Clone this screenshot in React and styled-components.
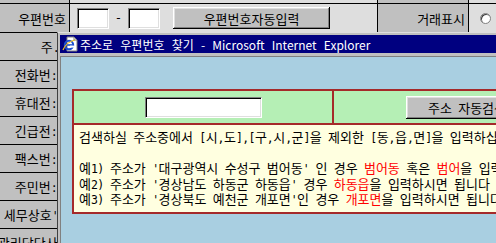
import React from "react";
import styled, { createGlobalStyle } from "styled-components";

const HANGUL = '"Noto Sans CJK KR", sans-serif';
const TITLE = '"Noto Sans CJK KR", sans-serif';

const Global = createGlobalStyle`
  html, body { margin: 0; padding: 0; background: #c0c0c0; }
  * { box-sizing: border-box; }
`;

const Page = styled.div`
  position: relative;
  width: 496px;
  height: 243px;
  overflow: hidden;
  background: #c0c0c0;
  font: 13px ${HANGUL};
  color: #000;
`;

// half-width latin run, like the old Gulim ascii
const Latin = styled.span`
  font-family: "DejaVu Sans Mono", monospace;
  font-size: 11.5px;
  letter-spacing: -0.6px;
`;

const mixed = text =>
  text.split(/([\x00-\x7f]+)/).map((part, i) =>
    i % 2 ? <Latin key={i}>{part}</Latin> : part
  );

const FormGrid = styled.div`
  display: grid;
  grid-template-columns: 69px 307px 90px 1fr;
  grid-template-rows: 3px 28px repeat(8, 27px);
  gap: 1px;
  background: #000;
`;

const Label = styled.div`
  background: #c0c0c0;
  display: flex;
  align-items: center;
  justify-content: flex-end;
  padding-right: ${p => p.$pad ?? 3}px;
  white-space: nowrap;
`;

const Value = styled.div`
  background: #dedede;
  display: flex;
  align-items: center;
  grid-column: ${p => (p.$span ? "2 / -1" : "auto")};
  padding-left: ${p => p.$pl || 0}px;
`;

const Sunken = styled.span`
  display: inline-block;
  width: ${p => p.$w}px;
  height: 21px;
  background: #fff;
  border-top: 1px solid #808080;
  border-left: 1px solid #808080;
  border-right: 1px solid #fff;
  border-bottom: 1px solid #fff;
  box-shadow: inset 1px 1px 0 #000, inset -1px -1px 0 #dfdfdf;
`;

const Dash = styled.span`
  width: 19px;
  text-align: center;
  font: 12px "DejaVu Sans", sans-serif;
`;

const Button = styled.span`
  display: inline-flex;
  align-items: center;
  justify-content: center;
  width: ${p => p.$w}px;
  height: ${p => p.$h || 22}px;
  margin-left: ${p => p.$ml || 0}px;
  background: #c0c0c0;
  white-space: nowrap;
  box-shadow: inset -1px -1px 0 #000, inset 1px 1px 0 #fff,
    inset -2px -2px 0 #808080, inset 2px 2px 0 #dfdfdf;
`;

const Radio = styled.span`
  width: 11px;
  height: 11px;
  margin-left: 11px;
  border-radius: 50%;
  background: #fff;
  border: 1px solid #808080;
  box-shadow: inset 1px 1px 0 #404040;
`;

const Win = styled.div`
  position: absolute;
  left: 57px;
  top: 32px;
  width: 480px;
  height: 240px;
  background: #c0c0c0;
  border-top: 1px solid #dfdfdf;
  border-left: 1px solid #404040;
  padding: 2px 0 0 2px;
  display: flex;
  flex-direction: column;
`;

const TitleBar = styled.div`
  height: 18px;
  background: #000080;
  color: #fff;
  display: flex;
  align-items: center;
  gap: 2px;
  padding-left: 2px;
  font: 12px ${TITLE};
  word-spacing: 4.5px;
  white-space: nowrap;
`;

const Content = styled.div`
  flex: 1;
  margin-top: 3px;
  background: #a9cfe1;
  border-top: 1px solid #808080;
  border-left: 1px solid #808080;
  padding: 32px 0 0 11px;
`;

const Table = styled.div`
  width: 520px;
  border: 2px solid #a52a2a;
`;

const GreenRow = styled.div`
  display: flex;
  height: 34px;
  border-bottom: 2px solid #a52a2a;
  background: #b5efb5;
`;

const GreenCell = styled.div`
  width: ${p => (p.$w ? p.$w + "px" : "auto")};
  flex: ${p => (p.$w ? "none" : 1)};
  display: flex;
  align-items: center;
  justify-content: ${p => (p.$center ? "center" : "flex-start")};
  border-right: ${p => (p.$line ? "2px solid #a52a2a" : "none")};
`;

const Notes = styled.div`
  background: #ffffe0;
  padding: 4px 0 5px 5px;
  line-height: 15.5px;
  white-space: nowrap;
  overflow: hidden;
`;

const Line = styled.div`
  height: 15.5px;
`;

const Em = styled.span`
  color: #f00;
`;

function IeIcon() {
  return (
    <svg width="16" height="16" viewBox="0 0 16 16">
      <path d="M5 1h7l3 3v11H5z" fill="#fff" stroke="#808080" />
      <path d="M12 1v3h3" fill="none" stroke="#808080" />
      <circle cx="7" cy="9" r="4.2" fill="none" stroke="#1c4fd0" strokeWidth="2" />
      <path d="M3.5 9h7" stroke="#1c4fd0" strokeWidth="1.6" />
      <path d="M1 14c2-5 7-9 12-10" fill="none" stroke="#f0c020" strokeWidth="1.2" />
      <rect x="8" y="9.6" width="4" height="2" fill="#fff" />
    </svg>
  );
}

const labels = [
  ["주.", 10],
  ["전화번:", 12],
  ["휴대전:", 12],
  ["긴급전:", 12],
  ["팩스번:", 12],
  ["주민번:", 12],
  ["세무상호'", 11],
  ["관리담당사:", 5],
];

// each example: [before, red, middle, red, after]
const examples = [
  ["예1) 주소가 '대구광역시 수성구 범어동' 인 경우 ", "범어동", " 혹은 ", "범어", "을 입력하시면 됩니다"],
  ["예2) 주소가 '경상남도 하동군 하동읍' 경우 ", "하동읍", "을 입력하시면 됩니다"],
  ["예3) 주소가 '경상북도 예천군 개포면'인 경우 ", "개포면", "을 입력하시면 됩니다"],
];

export default function App() {
  return (
    <Page>
      <Global />
      <FormGrid>
        <Label />
        <Value />
        <Label />
        <Value />

        <Label>우편번호</Label>
        <Value $pl={7}>
          <Sunken $w={32} />
          <Dash>-</Dash>
          <Sunken $w={32} />
          <Button $w={157} $ml={13}>우편번호자동입력</Button>
        </Value>
        <Label>거래표시</Label>
        <Value>
          <Radio />
        </Value>

        {labels.map(([text, pad]) => (
          <React.Fragment key={text}>
            <Label $pad={pad}><span>{mixed(text)}</span></Label>
            <Value $span />
          </React.Fragment>
        ))}
      </FormGrid>

      <Win>
        <TitleBar>
          <IeIcon />
          <span>주소로 우편번호 찾기 - Microsoft Internet Explorer</span>
        </TitleBar>
        <Content>
          <Table>
            <GreenRow>
              <GreenCell $w={260} $line $center>
                <Sunken $w={117} />
              </GreenCell>
              <GreenCell>
                <Button $w={122} $h={23} $ml={72}><span>{mixed("주소 자동검색")}</span></Button>
              </GreenCell>
            </GreenRow>
            <Notes>
              <Line>{mixed("검색하실 주소중에서 [시,도],[구,시,군]을 제외한 [동,읍,면]을 입력하십시오.")}</Line>
              <Line />
              {examples.map((parts, n) => (
                <Line key={n}>
                  {parts.map((p, i) =>
                    i % 2 ? <Em key={i}>{p}</Em> : <React.Fragment key={i}>{mixed(p)}</React.Fragment>
                  )}
                </Line>
              ))}
            </Notes>
          </Table>
        </Content>
      </Win>
    </Page>
  );
}
